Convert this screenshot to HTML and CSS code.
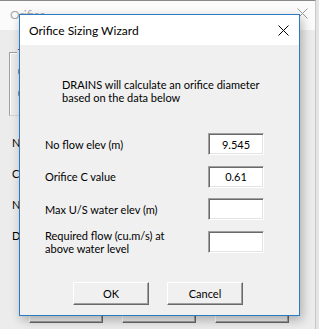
FILE: index.html
```html
<!DOCTYPE html>
<html>
<head>
<meta charset="utf-8">
<link rel="stylesheet" href="styles.css">
</head>
<body>
<div class="desk">
  <div class="bgwin">
    <div class="bg-title">
      <span class="bg-title-text">Orifice</span>
      <svg class="bg-close" width="11" height="11" viewBox="0 0 11 11"><path d="M0.5 0.5 L10.5 10.5 M10.5 0.5 L0.5 10.5" stroke="#9a9a9a" stroke-width="1" fill="none"/></svg>
    </div>
    <div class="bg-body">
      <div class="bg-group">
        <span class="bg-group-cap">Type</span>
        <div class="bg-radio"><span class="bg-dot"></span></div>
        <div class="bg-radio"><span class="bg-dot"></span></div>
      </div>
      <div class="bg-rows">
        <div class="bg-label">Name</div>
        <div class="bg-label">Crest</div>
        <div class="bg-label">No.</div>
        <div class="bg-label">Dia.</div>
      </div>
      <div class="bg-buttons">
        <div class="bg-btn">OK</div>
        <div class="bg-btn">Cancel</div>
        <div class="bg-btn">Help</div>
      </div>
    </div>
  </div>

  <div class="dlg">
    <div class="dlg-title">
      <span class="dlg-title-text">Orifice Sizing Wizard</span>
      <svg class="dlg-close" width="11" height="11" viewBox="0 0 11 11"><path d="M0.5 0.5 L10.5 10.5 M10.5 0.5 L0.5 10.5" stroke="#000" stroke-width="1" fill="none"/></svg>
    </div>
    <div class="dlg-body">
      <p class="intro">DRAINS will calculate an orifice diameter<br>based on the data below</p>
      <div class="form">
        <div class="row">
          <span class="label">No flow elev (m)</span>
          <span class="edit">9.545</span>
        </div>
        <div class="row">
          <span class="label">Orifice C value</span>
          <span class="edit">0.61</span>
        </div>
        <div class="row">
          <span class="label">Max U/S water elev (m)</span>
          <span class="edit"></span>
        </div>
        <div class="row">
          <span class="label">Required flow (cu.m/s) at<br>above water level</span>
          <span class="edit"></span>
        </div>
      </div>
      <div class="buttons">
        <div class="btn">OK</div>
        <div class="btn">Cancel</div>
      </div>
    </div>
  </div>
</div>
</body>
</html>
```
FILE: styles.css
```css
html, body {
  margin: 0;
  padding: 0;
}
body {
  width: 319px;
  height: 329px;
  overflow: hidden;
  background: #e4e4e4;
  font-family: Lato, "Liberation Sans", sans-serif;
  font-size: 11px;
  color: #000;
}
.desk {
  position: relative;
  width: 319px;
  height: 329px;
}

/* background (inactive) window */
.bgwin {
  position: absolute;
  left: 0;
  top: 0;
  width: 315px;
  height: 340px;
  background: #ececec;
  border-top: 1px solid #8a8a8a;
  border-right: 1px solid #c8c8c8;
}
.bg-title {
  height: 29px;
  background: #fbfbfb;
  display: flex;
  align-items: center;
  justify-content: space-between;
  padding: 0 7px 0 10px;
}
.bg-title-text {
  font-size: 12px;
  color: #a8a8a8;
  margin-top: -2px;
}
.bg-close {
  margin-top: -4px;
}
.bg-body {
  display: flex;
  flex-direction: column;
  padding: 22px 0 0 9px;
}
.bg-group {
  position: relative;
  width: 280px;
  height: 64px;
  border: 1px solid #d5d5d5;
  border-left-color: #a0a0a0;
  border-top-color: #a0a0a0;
  box-shadow: inset 1px 1px 0 #fff;
  display: flex;
  flex-direction: column;
  gap: 9px;
  padding: 12px 0 0 8px;
  box-sizing: border-box;
}
.bg-group-cap {
  position: absolute;
  left: 7px;
  top: -7px;
  background: #ececec;
  padding: 0 1px;
  color: #6a1b6a;
}
.bg-radio {
  display: flex;
  align-items: center;
  height: 13px;
}
.bg-dot {
  width: 11px;
  height: 11px;
  border: 1px solid #777;
  border-radius: 50%;
  background: #fff;
}
.bg-rows {
  display: flex;
  flex-direction: column;
  gap: 17px;
  padding: 20px 0 0 3px;
}
.bg-label {
  height: 14px;
  line-height: 14px;
}
.bg-buttons {
  display: flex;
  gap: 19px;
  padding: 66px 0 0 20px;
}
.bg-btn {
  width: 72px;
  height: 12px;
  line-height: 0;
  text-align: center;
  border: 1px solid #fff;
  border-right-color: #696969;
  border-bottom-color: #696969;
  box-shadow: inset -1px -1px 0 #a0a0a0;
}

/* front dialog */
.dlg {
  position: absolute;
  left: 19px;
  top: 14px;
  width: 279px;
  height: 300px;
  border: 1px solid #2a7bc4;
  background: #f0f0f0;
  box-shadow: 2px 4px 10px rgba(0, 0, 0, 0.28);
  display: flex;
  flex-direction: column;
}
.dlg-title {
  height: 30px;
  background: #fff;
  display: flex;
  align-items: center;
  justify-content: space-between;
  padding: 0 10px 0 9px;
}
.dlg-title-text {
  font-size: 12px;
}
.dlg-body {
  display: flex;
  flex-direction: column;
}
.intro {
  margin: 33px 0 0 42px;
  line-height: 13px;
}
.form {
  display: flex;
  flex-direction: column;
  gap: 10.5px;
  margin: 29px 0 0 25px;
}
.row {
  display: flex;
  align-items: center;
  height: 22px;
}
.label {
  width: 163px;
  line-height: 13px;
}
.edit {
  box-sizing: border-box;
  width: 56px;
  height: 22px;
  background: #fff;
  border: 1px solid;
  border-color: #a0a0a0 #ffffff #ffffff #a0a0a0;
  box-shadow: inset 1px 1px 0 #696969, inset -1px -1px 0 #e3e3e3;
  display: flex;
  align-items: center;
  justify-content: center;
  color: #000;
}
.buttons {
  display: flex;
  gap: 18px;
  margin: 29px 0 0 53px;
}
.btn {
  box-sizing: border-box;
  width: 76px;
  height: 23px;
  border: 1px solid;
  border-color: #fff #696969 #696969 #fff;
  box-shadow: inset -1px -1px 0 #a0a0a0;
  display: flex;
  align-items: center;
  justify-content: center;
}
```
